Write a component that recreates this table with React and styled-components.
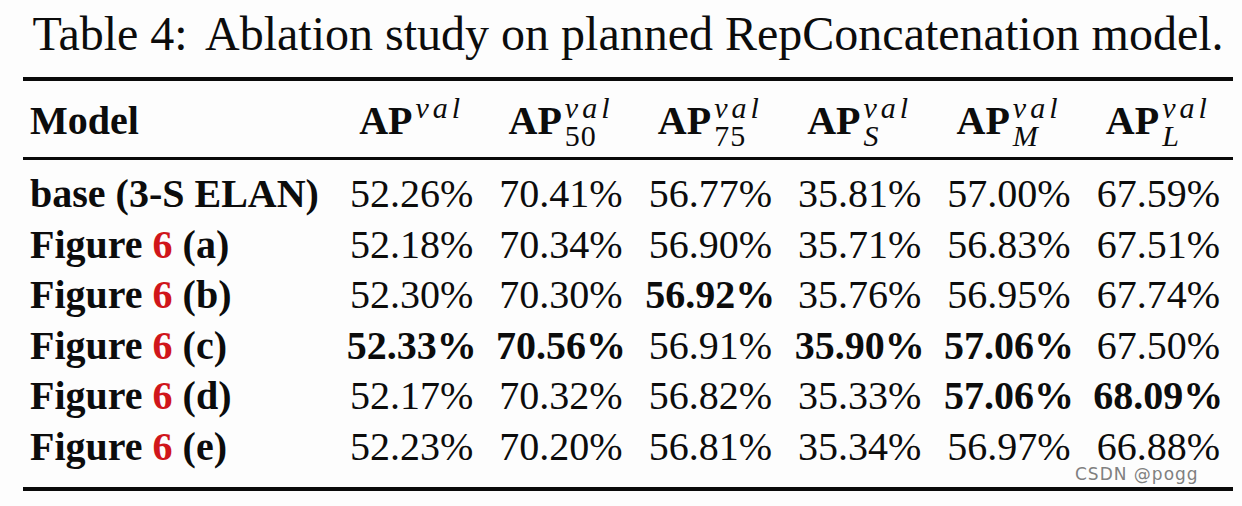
import React from 'react';
import styled, { createGlobalStyle } from 'styled-components';

const GlobalStyle = createGlobalStyle`
  html, body {
    margin: 0;
    padding: 0;
    background: #fdfdfd;
    font-family: 'Liberation Serif', 'Times New Roman', serif !important;
  }
`;

const Page = styled.div`
  position: relative;
  box-sizing: border-box;
  padding: 10px 9px 15px 23px;
  background: #fdfdfd;
  color: #0c0c0c;
  font-family: 'Liberation Serif', 'Times New Roman', serif !important;
`;

const Caption = styled.div`
  font-family: 'Liberation Serif', 'Times New Roman', serif !important;
  font-size: 48px;
  line-height: 48px;
  text-align: center;
  white-space: nowrap;
  margin-bottom: 19px;
`;

const CaptionLabel = styled.span`
  margin-right: 8px;
`;

const Rule = styled.div`
  height: ${(p) => p.$size}px;
  background: #0a0a0a;
`;

const Row = styled.div`
  display: grid;
  grid-template-columns: 314px repeat(6, 1fr);
  font-family: 'Liberation Serif', 'Times New Roman', serif !important;
  font-size: 40px;
  line-height: ${(p) => p.$lineHeight}px;
  white-space: nowrap;
`;

const HeaderRow = styled(Row)`
  padding-top: 3.5px;
  font-weight: bold;
`;

const Body = styled.div`
  padding: 9.75px 0 15px;
`;

const Cell = styled.div`
  text-align: ${(p) => (p.$left ? 'left' : 'center')};
  padding-left: ${(p) => (p.$left ? '7px' : '0')};
  font-weight: ${(p) => (p.$bold ? 'bold' : 'inherit')};
`;

const FigRef = styled.span`
  color: #d0161b;
`;

const Scripts = styled.span`
  display: inline-grid;
  vertical-align: 16px;
  font-size: 30px;
  line-height: 28px;
  font-weight: normal;
  margin-left: 3px;
  text-align: left;
`;

const Sup = styled.span`
  font-style: italic;
  letter-spacing: 4px;
`;

const Sub = styled.span`
  font-style: ${(p) => (p.$italic ? 'italic' : 'normal')};
  letter-spacing: 1px;
`;

const Watermark = styled.div`
  position: absolute;
  left: 1075px;
  top: 464px;
  font-family: 'DejaVu Sans', sans-serif !important;
  font-size: 17px;
  line-height: 20px;
  letter-spacing: 1px;
  color: #808080;
`;

const headers = [
  { sub: null },
  { sub: '50' },
  { sub: '75' },
  { sub: 'S', italic: true },
  { sub: 'M', italic: true },
  { sub: 'L', italic: true },
];

// bold marks the best value of each column
const rows = [
  { name: 'base (3-S ELAN)', values: ['52.26', '70.41', '56.77', '35.81', '57.00', '67.59'], best: [] },
  { fig: 'a', values: ['52.18', '70.34', '56.90', '35.71', '56.83', '67.51'], best: [] },
  { fig: 'b', values: ['52.30', '70.30', '56.92', '35.76', '56.95', '67.74'], best: [2] },
  { fig: 'c', values: ['52.33', '70.56', '56.91', '35.90', '57.06', '67.50'], best: [0, 1, 3, 4] },
  { fig: 'd', values: ['52.17', '70.32', '56.82', '35.33', '57.06', '68.09'], best: [4, 5] },
  { fig: 'e', values: ['52.23', '70.20', '56.81', '35.34', '56.97', '66.88'], best: [] },
];

const ModelName = ({ row }) =>
  row.name ? (
    row.name
  ) : (
    <>
      Figure <FigRef>6</FigRef> ({row.fig})
    </>
  );

const App = () => (
  <Page>
    <GlobalStyle />
    <Caption>
      <CaptionLabel>Table 4:</CaptionLabel> Ablation study on planned RepConcatenation model.
    </Caption>
    <Rule $size={4} />
    <HeaderRow $lineHeight={72}>
      <Cell $left>Model</Cell>
      {headers.map((h, i) => (
        <Cell key={i}>
          AP
          <Scripts>
            <Sup>val</Sup>
            {h.sub && <Sub $italic={h.italic}>{h.sub}</Sub>}
          </Scripts>
        </Cell>
      ))}
    </HeaderRow>
    <Rule $size={3} />
    <Body>
      {rows.map((row, r) => (
        <Row key={r} $lineHeight={50.5}>
          <Cell $left $bold>
            <ModelName row={row} />
          </Cell>
          {row.values.map((v, i) => (
            <Cell key={i} $bold={row.best.includes(i)}>
              {v}%
            </Cell>
          ))}
        </Row>
      ))}
    </Body>
    <Rule $size={4} />
    <Watermark>CSDN @pogg</Watermark>
  </Page>
);

export default App;
